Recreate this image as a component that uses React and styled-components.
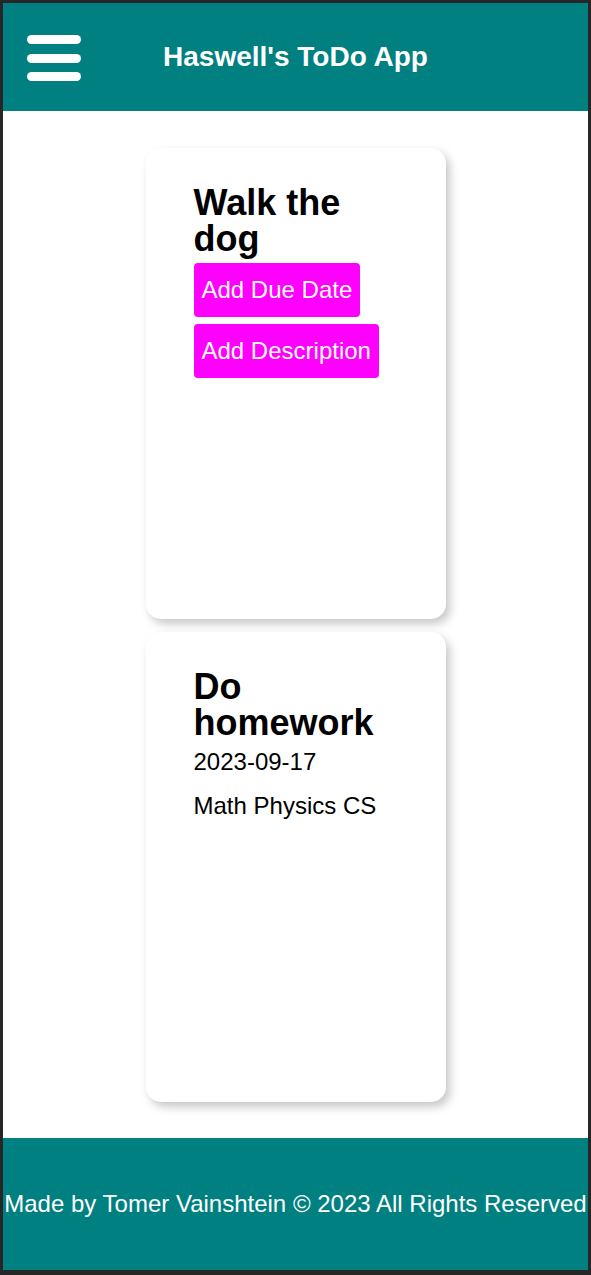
import styled, { createGlobalStyle } from "styled-components";

const GlobalStyle = createGlobalStyle`
  html, body {
    margin: 0;
    background: #262626;
  }
  body {
    padding: 3px 3px 5px 3px;
    font-family: "Liberation Sans", Arial, sans-serif;
  }
`;

const todos = [
  { title: "Walk the dog" },
  { title: "Do homework", date: "2023-09-17", description: "Math Physics CS" },
];

function TodoCard({ todo }) {
  return (
    <Card>
      <CardTitle>{todo.title}</CardTitle>
      {todo.date ? (
        <DueDate>{todo.date}</DueDate>
      ) : null}
      {todo.description ? (
        <Description>{todo.description}</Description>
      ) : null}
      {!todo.date && !todo.description && (
        <Actions>
          <AddButton>Add Due Date</AddButton>
          <AddButton>Add Description</AddButton>
        </Actions>
      )}
    </Card>
  );
}

function App() {
  return (
    <Page>
      <GlobalStyle />
      <Header>
        <MenuButton aria-label="menu">
          <MenuLine />
          <MenuLine />
          <MenuLine />
        </MenuButton>
        <Title>Haswell's ToDo App</Title>
        <span />
      </Header>
      <Main>
        {todos.map((todo) => (
          <TodoCard key={todo.title} todo={todo} />
        ))}
      </Main>
      <Footer>Made by Tomer Vainshtein © 2023 All Rights Reserved</Footer>
    </Page>
  );
}

export default App;

const Page = styled.div`
  display: flex;
  flex-direction: column;
  background: #ffffff;
`;

const Header = styled.header`
  display: grid;
  grid-template-columns: 1fr auto 1fr;
  align-items: center;
  height: 108px;
  background-color: #008080;
  padding: 0 24px;
`;

const MenuButton = styled.div`
  display: flex;
  flex-direction: column;
  gap: 9.5px;
  width: 54px;
  margin-top: 2px;
`;

const MenuLine = styled.span`
  display: block;
  height: 9px;
  border-radius: 5px;
  background: #ffffff;
`;

const Title = styled.h1`
  margin: 0;
  color: #ffffff;
  font-size: 28px;
  font-weight: bold;
`;

const Main = styled.main`
  display: flex;
  flex-direction: column;
  align-items: center;
  gap: 13px;
  padding: 37px 0 36px;
  height: 1027px;
  box-sizing: border-box;
`;

const Card = styled.div`
  box-sizing: border-box;
  width: 300px;
  height: 471px;
  padding: 37px 48px;
  border-radius: 15px;
  background: #ffffff;
  box-shadow: 4px 5px 10px rgba(0, 0, 0, 0.22);
`;

const CardTitle = styled.h2`
  margin: 0;
  font-size: 36px;
  line-height: 36px;
  font-weight: bold;
  color: #000000;
`;

const Actions = styled.div`
  display: flex;
  flex-direction: column;
  align-items: flex-start;
  gap: 7px;
  margin-top: 6px;
`;

const AddButton = styled.button`
  height: 54px;
  padding: 0 8px;
  border: none;
  border-radius: 4px;
  background: #ff00ff;
  color: #ffffff;
  font-family: "Liberation Sans", Arial, sans-serif;
  font-size: 24px;
  white-space: nowrap;
`;

const DueDate = styled.p`
  margin: 7px 0 0;
  font-size: 24px;
  color: #000000;
`;

const Description = styled.p`
  margin: 16px 0 0;
  font-size: 24px;
  color: #000000;
`;

const Footer = styled.footer`
  display: flex;
  align-items: center;
  justify-content: center;
  height: 132px;
  background-color: #008080;
  color: #ffffff;
  font-size: 24px;
  white-space: nowrap;
`;
